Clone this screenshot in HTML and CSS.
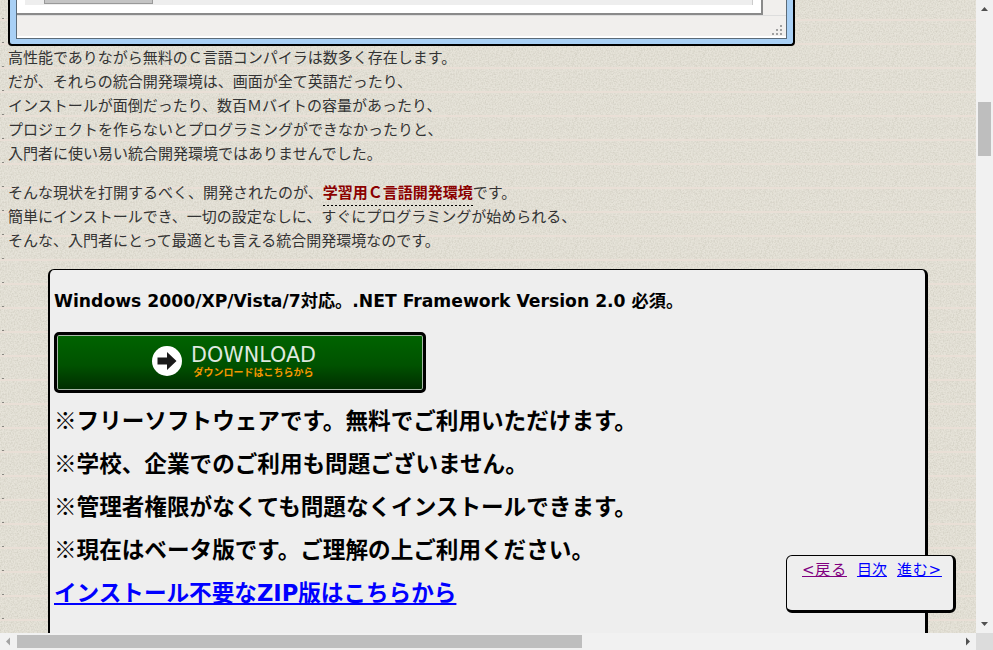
FILE: index.html
```html
<!DOCTYPE html>
<html lang="ja">
<head>
<meta charset="utf-8">
<title>学習用C言語開発環境</title>
<link rel="stylesheet" href="styles.css">
</head>
<body>
<div class="viewport">
  <div class="middle">
    <main class="page">
      <div class="shot">
        <div class="shot-inner">
          <div class="shot-client">
            <div class="shot-list"><div class="shot-thumb"></div></div>
          </div>
          <div class="shot-status">
            <svg class="grip" width="12" height="12" viewBox="0 0 12 12"><path d="M9 1h2v2H9zM5 5h2v2H5zM9 5h2v2H9zM1 9h2v2H1zM5 9h2v2H5zM9 9h2v2H9z" fill="#a0a0a0"/></svg>
          </div>
        </div>
      </div>
      <p class="para">高性能でありながら無料のＣ言語コンパイラは数多く存在します。<br>だが、それらの統合開発環境は、画面が全て英語だったり、<br>インストールが面倒だったり、数百Ｍバイトの容量があったり、<br>プロジェクトを作らないとプログラミングができなかったりと、<br>入門者に使い易い統合開発環境ではありませんでした。</p>
      <p class="para para-2">そんな現状を打開するべく、開発されたのが、<strong class="term">学習用Ｃ言語開発環境</strong>です。<br>簡単にインストールでき、一切の設定なしに、すぐにプログラミングが始められる、<br>そんな、入門者にとって最適とも言える統合開発環境なのです。</p>
      <section class="box">
        <p class="req">Windows 2000/XP/Vista/7対応。.NET Framework Version 2.0 必須。</p>
        <a class="dl" href="#">
          <svg class="dl-icon" width="30" height="30" viewBox="0 0 30 30"><circle cx="15" cy="15" r="15" fill="#fff"/><path d="M5.500 11.500h9.500V6l9.500 9-9.500 9v-5.500H5.500z" fill="#1a1a1a"/></svg>
          <span class="dl-text"><span class="dl-main">DOWNLOAD</span><span class="dl-sub">ダウンロードはこちらから</span></span>
        </a>
        <p class="note note-first"><span class="mark">※</span>フリーソフトウェアです。無料でご利用いただけます。</p>
        <p class="note"><span class="mark">※</span>学校、企業でのご利用も問題ございません。</p>
        <p class="note"><span class="mark">※</span>管理者権限がなくても問題なくインストールできます。</p>
        <p class="note"><span class="mark">※</span>現在はベータ版です。ご理解の上ご利用ください。</p>
        <p class="note"><a class="zip" href="#">インストール不要なZIP版はこちらから</a></p>
      </section>
    </main>
    <div class="vbar">
      <svg width="17" height="17" viewBox="0 0 17 17"><path d="M5 11l3.500-4 3.500 4z" fill="#505050"/></svg>
      <div class="vtrack"><div class="vthumb"></div></div>
      <svg width="17" height="17" viewBox="0 0 17 17"><path d="M5 6l3.500 4 3.500-4z" fill="#505050"/></svg>
    </div>
    <nav class="pager">
      <a class="visited wide" href="#">&lt;戻る</a><a href="#">目次</a><a class="wide" href="#">進む&gt;</a>
    </nav>
  </div>
  <div class="hbar">
    <svg width="17" height="17" viewBox="0 0 17 17"><path d="M10 4.500l-4 4 4 4z" fill="#a3a3a3"/></svg>
    <div class="htrack"><div class="hthumb"></div></div>
    <svg width="17" height="17" viewBox="0 0 17 17"><path d="M7 4.500l4 4-4 4z" fill="#505050"/></svg>
    <div class="corner"></div>
  </div>
</div>
</body>
</html>
```

FILE: styles.css
```css
* { box-sizing: border-box; }
html, body { margin: 0; padding: 0; height: 100%; overflow: hidden; }
body { font-family: "DejaVu Sans", "Noto Sans CJK JP", sans-serif; color: #333; }
.viewport { width: 993px; height: 650px; display: flex; flex-direction: column; overflow: hidden; }
.middle { position: relative; flex: 1; min-height: 0; display: flex; }
.page {
  flex: 1; min-width: 0; overflow: hidden; padding-left: 8px;
  background-color: #e6e3d9;
  background-image:
    repeating-linear-gradient(#e9dfd6 0 2px, transparent 2px 24px),
    radial-gradient(circle, #222 0.6px, transparent 0.8px),
    url("data:image/svg+xml,%3Csvg xmlns='http://www.w3.org/2000/svg' width='64' height='64'%3E%3Cfilter id='n'%3E%3CfeTurbulence type='fractalNoise' baseFrequency='.7' numOctaves='2' stitchTiles='stitch'/%3E%3CfeColorMatrix values='0 0 0 0 .55 0 0 0 0 .53 0 0 0 0 .45 0 0 0 1.1 -.4'/%3E%3C/filter%3E%3Crect width='64' height='64' filter='url(%23n)'/%3E%3C/svg%3E");
  background-size: 100% 24px, 6px 24px, 64px 64px;
  background-position: 0 19px, 0 7px, 0 0;
  background-repeat: repeat, repeat-y, repeat;
}
.shot {
  width: 787px; height: 46px; background: #a9d0f5; border: 2px solid #000; border-top: 0;
  padding: 0 6px 5px 6px; border-radius: 0 0 4px 4px;
}
.shot-inner { height: 100%; background: #f1efed; border: 1px solid #5c6b78; border-top: 0; display: flex; flex-direction: column; }
.shot-client { height: 15px; background: #fff; border-bottom: 2px solid #8a8a8a; border-right: 2px solid #8a8a8a; margin-right: 23px; padding: 0 8px 0 8px; }
.shot-list { height: 5px; background: #eee; border-right: 1px solid #ccc; padding-left: 19px; }
.shot-thumb { width: 109px; height: 4px; background: #c4c4c4; border: 1px solid #999; border-top: 0; }
.shot-status { flex: 1; display: flex; justify-content: flex-end; align-items: flex-end; padding: 0 3px 0 0; border-top: 1px solid #ddd; border-bottom: 2px solid #fff; }
.para { margin: 0; font-size: 15px; line-height: 24px; color: #333; }
.para-2 { margin-top: 15px; }
.term {
  color: #8b0000; font-weight: 700; padding-bottom: 4px;
  background: repeating-linear-gradient(90deg, #000 0 2px, transparent 2px 4px) left bottom / 100% 1px no-repeat;
}
.box {
  margin: 16px 0 0 40px; width: 880px; height: 400px;
  background: #eee; border: 1px solid #000; border-left-width: 2px; border-right-width: 3px; border-bottom: 0;
  border-radius: 6px 6px 0 0; padding: 18px 5px 0 4px;
}
.req { margin: 0; font-size: 17.2px; font-weight: 700; line-height: 26px; color: #000; }
.dl {
  display: flex; width: 372px; height: 61px; margin-top: 18px; padding: 0 12px 3px 0; align-items: center; justify-content: center; gap: 9px;
  border: 3px solid #000; border-radius: 5px; box-shadow: inset 0 0 0 1px #a8b8a8;
  background: linear-gradient(#006400, #005200 55%, #002c00); text-decoration: none;
}
.dl-text { display: flex; flex-direction: column; align-items: center; margin-top: 3px; }
.dl-main { font-size: 20.7px; line-height: 21px; color: #dfe8df; }
.dl-sub { font-size: 10px; line-height: 14px; font-weight: 700; color: #f39800; }
.note { margin: 6px 0 0; font-size: 22.6px; font-weight: 700; line-height: 37px; color: #000; }
.note-first { margin-top: 10px; }
.mark { font-family: "Noto Sans CJK JP", sans-serif; line-height: 0; }
.zip { color: #00f; }
.vbar { width: 17px; background: #f1f1f1; display: flex; flex-direction: column; }
.vtrack { flex: 1; padding-top: 85px; }
.vthumb { margin: 0 2px; height: 54px; background: #bebebe; }
.hbar { height: 17px; background: #f1f1f1; display: flex; }
.htrack { flex: 1; }
.hthumb { width: 565px; height: 13px; margin-top: 2px; background: #bebebe; }
.corner { width: 17px; background: #dcdcdc; }
.pager {
  position: absolute; left: 786px; top: 555px; width: 170px; height: 58px;
  background: #eee; border: 1px solid #000; border-right-width: 3px; border-bottom-width: 3px; border-radius: 6px;
  padding: 3px 0 0 15px; font-size: 15px; line-height: 22px; display: flex; gap: 10px; align-items: flex-start;
}
.pager a { color: #00f; }
.pager a.visited { color: #800080; }
.pager a.wide { letter-spacing: 0.8px; }
```
